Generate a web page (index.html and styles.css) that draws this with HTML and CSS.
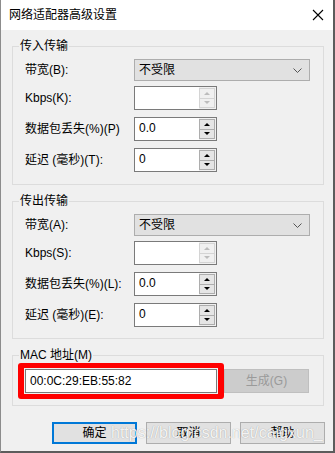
FILE: index.html
```html
<!DOCTYPE html>
<html lang="zh-CN">
<head>
  <meta charset="UTF-8">
  <title>网络适配器高级设置</title>
  <link rel="stylesheet" href="styles.css">
</head>
<body>
  <div class="window">
    <div class="title-bar">
      <span class="title">网络适配器高级设置</span>
      <svg class="close" width="12" height="12" viewBox="0 0 12 12">
        <path d="M1 1 L11 11 M11 1 L1 11" stroke="#000" stroke-width="1.1" fill="none"/>
      </svg>
    </div>

    <div class="content">
      <fieldset class="group group-in">
        <legend>传入传输</legend>
        <div class="row row-combo">
          <span class="label">带宽(B):</span>
          <div class="combo">
            <span>不受限</span>
            <svg width="9" height="5" viewBox="0 0 9 5"><path d="M0.5 0.5 L4.5 4.5 L8.5 0.5" stroke="#555" fill="none"/></svg>
          </div>
        </div>
        <div class="row">
          <span class="label">Kbps(K):</span>
          <div class="spin disabled">
            <div class="spin-text"></div>
            <div class="spin-btns"><div class="spin-btn"><i class="up"></i></div><div class="spin-btn"><i class="down"></i></div></div>
          </div>
        </div>
        <div class="row">
          <span class="label">数据包丢失(%)(P)</span>
          <div class="spin">
            <div class="spin-text">0.0</div>
            <div class="spin-btns"><div class="spin-btn"><i class="up"></i></div><div class="spin-btn"><i class="down"></i></div></div>
          </div>
        </div>
        <div class="row">
          <span class="label">延迟 (毫秒)(T):</span>
          <div class="spin">
            <div class="spin-text">0</div>
            <div class="spin-btns"><div class="spin-btn"><i class="up"></i></div><div class="spin-btn"><i class="down"></i></div></div>
          </div>
        </div>
      </fieldset>

      <fieldset class="group group-out">
        <legend>传出传输</legend>
        <div class="row row-combo">
          <span class="label">带宽(A):</span>
          <div class="combo">
            <span>不受限</span>
            <svg width="9" height="5" viewBox="0 0 9 5"><path d="M0.5 0.5 L4.5 4.5 L8.5 0.5" stroke="#555" fill="none"/></svg>
          </div>
        </div>
        <div class="row">
          <span class="label">Kbps(S):</span>
          <div class="spin disabled">
            <div class="spin-text"></div>
            <div class="spin-btns"><div class="spin-btn"><i class="up"></i></div><div class="spin-btn"><i class="down"></i></div></div>
          </div>
        </div>
        <div class="row">
          <span class="label">数据包丢失(%)(L):</span>
          <div class="spin">
            <div class="spin-text">0.0</div>
            <div class="spin-btns"><div class="spin-btn"><i class="up"></i></div><div class="spin-btn"><i class="down"></i></div></div>
          </div>
        </div>
        <div class="row">
          <span class="label">延迟 (毫秒)(E):</span>
          <div class="spin">
            <div class="spin-text">0</div>
            <div class="spin-btns"><div class="spin-btn"><i class="up"></i></div><div class="spin-btn"><i class="down"></i></div></div>
          </div>
        </div>
      </fieldset>

      <fieldset class="group group-mac">
        <legend>MAC 地址(M)</legend>
        <div class="mac-row">
          <div class="highlight">
            <div class="mac-edit">00:0C:29:EB:55:82</div>
          </div>
          <div class="btn btn-disabled">生成(G)</div>
        </div>
      </fieldset>
    </div>

    <div class="buttons">
      <div class="btn btn-default">确定</div>
      <div class="btn">取消</div>
      <div class="btn">帮助</div>
    </div>

    <div class="watermark">https://blog.csdn.net/caigxun_</div>
  </div>
</body>
</html>
```

FILE: styles.css
```css
html, body {
  margin: 0;
  padding: 0;
  background-color: #f0f0f0;
}

.window {
  position: relative;
  width: 335px;
  height: 453px;
  box-sizing: border-box;
  border-left: 1px solid #8c8c8c;
  border-right: 2px solid #5c5c5c;
  border-bottom: 2px solid #5c5c5c;
  background-color: #f0f0f0;
  font-family: "Liberation Sans", "Noto Sans CJK SC", sans-serif;
  font-size: 12px;
  line-height: 16px;
  color: #000;
  overflow: hidden;
}

.title-bar {
  height: 30px;
  background-color: white;
  display: flex;
  align-items: center;
  justify-content: space-between;
  padding: 0 8px 0 8px;
}

.title {
  font-size: 12px;
}

.close {
  margin-right: 1px;
}

.content {
  padding: 8px 9px 0 11px;
}

.group {
  margin: 0;
  border: 1px solid #dcdcdc;
  padding: 5px 13px 11px 12px;
  display: flex;
  flex-direction: column;
  gap: 7px;
}

.group + .group {
  margin-top: 8px;
}

.group-in {
  padding-bottom: 12px;
}

.group legend {
  margin-left: -6px;
  padding: 0 1px;
  line-height: 16px;
}

.row {
  display: flex;
  align-items: center;
  height: 24px;
}

.row-combo {
  height: 22px;
  margin-bottom: -2px;
}

.label {
  width: 109px;
  white-space: nowrap;
}

/* 下拉框 */
.combo {
  width: 176px;
  height: 22px;
  box-sizing: border-box;
  border: 1px solid #adadad;
  background-color: #e1e1e1;
  display: flex;
  align-items: center;
  justify-content: space-between;
  padding: 0 7px 0 4px;
}

/* 数值输入框 */
.spin {
  width: 83px;
  height: 24px;
  box-sizing: border-box;
  border: 1px solid #7a7a7a;
  background-color: white;
  display: flex;
}

.spin-text {
  flex: 1;
  padding-left: 4px;
  line-height: 20px;
}

.spin-btns {
  width: 17px;
  padding: 1px 0 1px 0;
  display: flex;
  flex-direction: column;
  background-color: #f0f0f0;
}

.spin-btn {
  flex: 1;
  margin-right: 1px;
  border: 1px solid #adadad;
  background-color: #e5e5e5;
  display: flex;
  align-items: center;
  justify-content: center;
}

.spin-btn + .spin-btn {
  border-top: none;
}

.spin-btn i {
  width: 0;
  height: 0;
  border-left: 3px solid transparent;
  border-right: 3px solid transparent;
}

.spin-btn .up {
  border-bottom: 3px solid #000;
}

.spin-btn .down {
  border-top: 3px solid #000;
}

.spin.disabled .spin-btn {
  border-color: #d4d4d4;
  background-color: #f0f0f0;
}

.spin.disabled .up {
  border-bottom-color: #bcbcbc;
}

.spin.disabled .down {
  border-top-color: #bcbcbc;
}

/* MAC 地址 */
.group-mac {
  padding: 0 13px 6px 5px;
}

.group-mac legend {
  margin-left: 1px;
}

.mac-row {
  display: flex;
  align-items: center;
}

.highlight {
  border: 6px solid #ff0000;
  border-top-width: 5px;
  border-bottom-width: 5px;
  border-radius: 3px;
  padding: 1px;
  background-color: #f0f0f0;
}

.mac-edit {
  width: 192px;
  height: 24px;
  box-sizing: border-box;
  border: 1px solid #7a7a7a;
  background-color: white;
  padding-left: 4px;
  line-height: 22px;
  font-size: 12px;
}

.btn {
  width: 85px;
  height: 22px;
  box-sizing: border-box;
  border: 1px solid #adadad;
  background-color: #e1e1e1;
  display: flex;
  align-items: center;
  justify-content: center;
}

.btn-disabled {
  height: 24px;
  border-color: #bfbfbf;
  background-color: #cccccc;
  color: #9a9a9a;
}

.btn-default {
  border: 2px solid #0078d7;
}

.buttons {
  display: flex;
  justify-content: flex-end;
  gap: 9px;
  padding: 16px 8px 0 0;
}

.watermark {
  position: absolute;
  left: 110px;
  top: 423px;
  font-family: "Liberation Sans", sans-serif;
  font-size: 16px;
  line-height: 20px;
  color: rgba(255, 255, 255, 0.9);
  text-shadow: 0 0 1px rgba(0, 0, 0, 0.35);
  white-space: nowrap;
}
```
